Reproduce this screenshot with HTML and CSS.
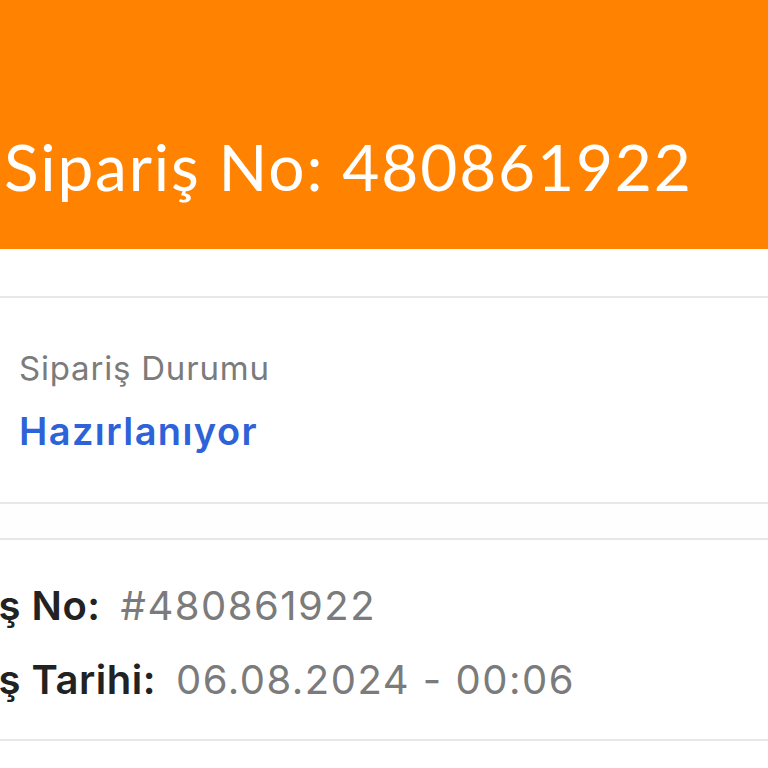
FILE: index.html
```html
<!DOCTYPE html>
<html lang="tr">
<head>
<meta charset="utf-8">
<title>Sipariş Detayı</title>
<link rel="stylesheet" href="styles.css">
</head>
<body>
<header class="top">
  <h1 class="title">Sipariş No: 480861922</h1>
</header>
<div class="spacer"></div>
<section class="card status-card">
  <div class="status-label">Sipariş Durumu</div>
  <div class="status-value">Hazırlanıyor</div>
</section>
<div class="gap"></div>
<section class="card info-card">
  <div class="info-rows">
    <div class="row"><span class="key">Sipariş No:</span><span class="val">#480861922</span></div>
    <div class="row"><span class="key">Sipariş Tarihi:</span><span class="val">06.08.2024 - 00:06</span></div>
  </div>
</section>
</body>
</html>
```

FILE: styles.css
```css
html, body {
  margin: 0;
  padding: 0;
  background: #ffffff;
  overflow: hidden;
}
body {
  font-family: Inter, "Noto Sans", sans-serif;
  width: 768px;
  height: 768px;
}
.top {
  background: #ff8300;
  height: 249px;
  box-sizing: border-box;
  padding: 129px 0 0 4px;
}
.title {
  margin: 0;
  font-family: Lato, "Open Sans", sans-serif;
  font-weight: 400;
  font-size: 64px;
  line-height: 76px;
  color: #ffffff;
  letter-spacing: 1.8px;
}
.spacer {
  height: 47px;
}
.card {
  border-top: 2px solid #e7e7e7;
  border-bottom: 2px solid #e7e7e7;
  background: #fff;
  box-sizing: border-box;
}
.status-card {
  height: 208px;
  padding: 50px 19px 0;
}
.status-label {
  font-size: 33px;
  line-height: 40px;
  color: #7b7b7b;
  letter-spacing: 0.8px;
}
.status-value {
  margin-top: 21px;
  font-size: 38px;
  line-height: 44px;
  font-weight: 600;
  color: #2d62d8;
  letter-spacing: 1.4px;
}
.gap {
  height: 34px;
  background: #fefefe;
}
.info-card {
  height: 203px;
  padding: 44px 0 0;
}
.info-rows {
  margin-left: -116px;
  display: flex;
  flex-direction: column;
  gap: 30px;
}
.row {
  display: flex;
  gap: 20px;
  font-size: 40px;
  line-height: 44px;
  white-space: nowrap;
}
.key {
  font-weight: 600;
  color: #222222;
  letter-spacing: 0.5px;
}
.val {
  color: #7b7b7b;
  letter-spacing: 1.5px;
}
```
